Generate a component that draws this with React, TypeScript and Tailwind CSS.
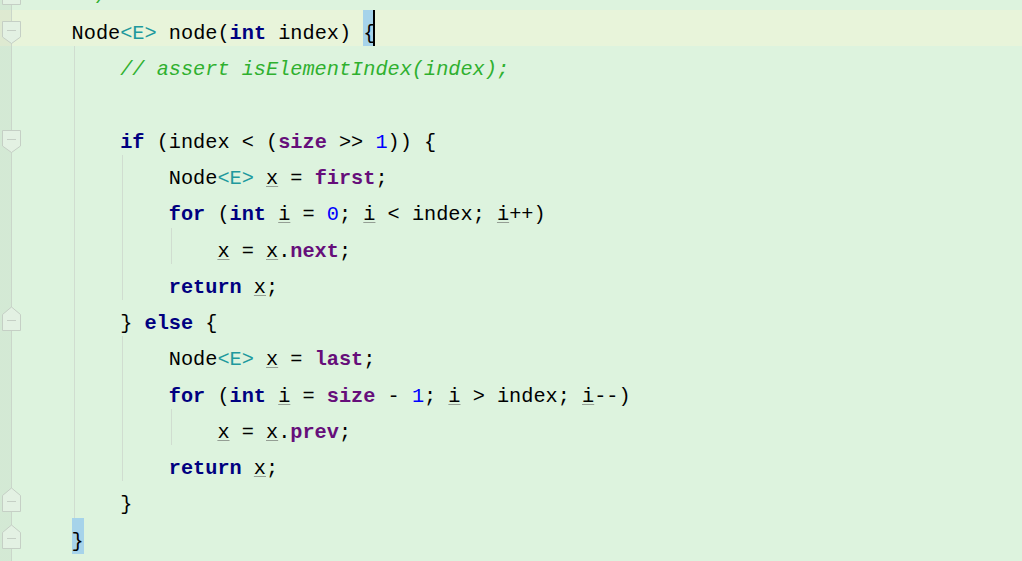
import React from "react";

type Tok = [string, string?];
type Line = { indent: number; toks: Tok[]; marker?: "down" | "up"; current?: boolean };

const L: Line[] = [
  { indent: 1, toks: [[" "], ["*/", "c"]], marker: "up" },
  {
    indent: 1,
    current: true,
    marker: "down",
    toks: [["Node"], ["<E>", "t"], [" node("], ["int", "k"], [" index) "], ["{", "bc"]],
  },
  { indent: 2, toks: [["// assert isElementIndex(index);", "c"]] },
  { indent: 2, toks: [] },
  {
    indent: 2,
    marker: "down",
    toks: [["if", "k"], [" (index < ("], ["size", "f"], [" >> "], ["1", "n"], [")) {"]],
  },
  { indent: 3, toks: [["Node"], ["<E>", "t"], [" "], ["x", "u"], [" = "], ["first", "f"], [";"]] },
  {
    indent: 3,
    toks: [
      ["for", "k"], [" ("], ["int", "k"], [" "], ["i", "u"], [" = "], ["0", "n"], ["; "], ["i", "u"],
      [" < index; "], ["i", "u"], ["++)"],
    ],
  },
  { indent: 4, toks: [["x", "u"], [" = "], ["x", "u"], ["."], ["next", "f"], [";"]] },
  { indent: 3, toks: [["return", "k"], [" "], ["x", "u"], [";"]] },
  { indent: 2, marker: "up", toks: [["} "], ["else", "k"], [" {"]] },
  { indent: 3, toks: [["Node"], ["<E>", "t"], [" "], ["x", "u"], [" = "], ["last", "f"], [";"]] },
  {
    indent: 3,
    toks: [
      ["for", "k"], [" ("], ["int", "k"], [" "], ["i", "u"], [" = "], ["size", "f"], [" - "], ["1", "n"],
      ["; "], ["i", "u"], [" > index; "], ["i", "u"], ["--)"],
    ],
  },
  { indent: 4, toks: [["x", "u"], [" = "], ["x", "u"], ["."], ["prev", "f"], [";"]] },
  { indent: 3, toks: [["return", "k"], [" "], ["x", "u"], [";"]] },
  { indent: 2, marker: "up", toks: [["}"]] },
  { indent: 1, marker: "up", toks: [["}", "b"]] },
  { indent: 0, toks: [] },
];

function Token({ t }: { t: Tok }) {
  const [text, kind] = t;
  switch (kind) {
    case "k":
      return <span className="font-bold text-[#000080]">{text}</span>;
    case "f":
      return <span className="font-bold text-[#660e7a]">{text}</span>;
    case "n":
      return <span className="text-[#0000ff]">{text}</span>;
    case "c":
      return <span className="italic text-[#2fb02f]">{text}</span>;
    case "t":
      return <span className="text-[#20999d]">{text}</span>;
    case "u":
      return (
        <span className="underline decoration-[#949e94] decoration-1 underline-offset-2">{text}</span>
      );
    case "b":
      return (
        <span className="inline-block w-[12.15px] bg-[#a6d3ea] -mt-[12px] pt-[12px] pb-[1.25px]">
          {text}
        </span>
      );
    case "bc":
      return (
        <span className="inline-block w-[12.15px] bg-[#a6d3ea] -mt-[12px] pt-[12px] pb-[1.25px] shadow-[inset_-2px_0_0_#000]">
          {text}
        </span>
      );
    default:
      return <span>{text}</span>;
  }
}

function Marker({ kind }: { kind: "down" | "up" }) {
  if (kind === "down") {
    return (
      <svg className="absolute left-0 top-0" width="23" height="37" viewBox="0 0 23 37">
        <polygon
          points="2.5,11.5 20.5,11.5 20.5,27 11.5,33.5 2.5,27"
          fill="#e3f1e3"
          stroke="#c5cfc5"
          strokeWidth="1"
        />
        <line x1="7" y1="20.5" x2="16" y2="20.5" stroke="#c5cfc5" strokeWidth="1" />
      </svg>
    );
  }
  return (
    <svg className="absolute left-0 top-0" width="23" height="37" viewBox="0 0 23 37">
      <polygon
        points="11.5,7 20.5,14.5 20.5,30.5 2.5,30.5 2.5,14.5"
        fill="#e3f1e3"
        stroke="#c5cfc5"
        strokeWidth="1"
      />
      <line x1="7" y1="20.5" x2="16" y2="20.5" stroke="#c5cfc5" strokeWidth="1" />
    </svg>
  );
}

export default function App() {
  return (
    <div className="h-[561px] w-[1022px] overflow-hidden bg-[#ddf3de] font-['Liberation_Mono',monospace] text-[20.25px] text-black">
      <div className="-mt-[26.25px] flex flex-col">
        {L.map((line, i) => (
          <div
            key={i}
            className={`flex h-[36.25px] shrink-0 ${line.current ? "bg-[#e8f4da]" : ""}`}
          >
            <div className="relative h-full w-[23px] shrink-0 bg-[linear-gradient(to_right,rgba(0,0,0,0.045)_11px,#cad6ca_11px,#cad6ca_12px,transparent_12px)]">
              {line.marker && <Marker kind={line.marker} />}
            </div>
            <div className="flex h-full">
              {Array.from({ length: line.indent }).map((_, u) => (
                <div key={u} className="h-full w-[48.6px] shrink-0">
                  {u >= 1 && <div className="ml-[2px] h-full w-px bg-[#d0ddd0]" />}
                </div>
              ))}
              <div className="mt-[12px] whitespace-pre leading-[23px]">
                {line.toks.map((t, j) => (
                  <Token key={j} t={t} />
                ))}
              </div>
            </div>
          </div>
        ))}
      </div>
    </div>
  );
}
